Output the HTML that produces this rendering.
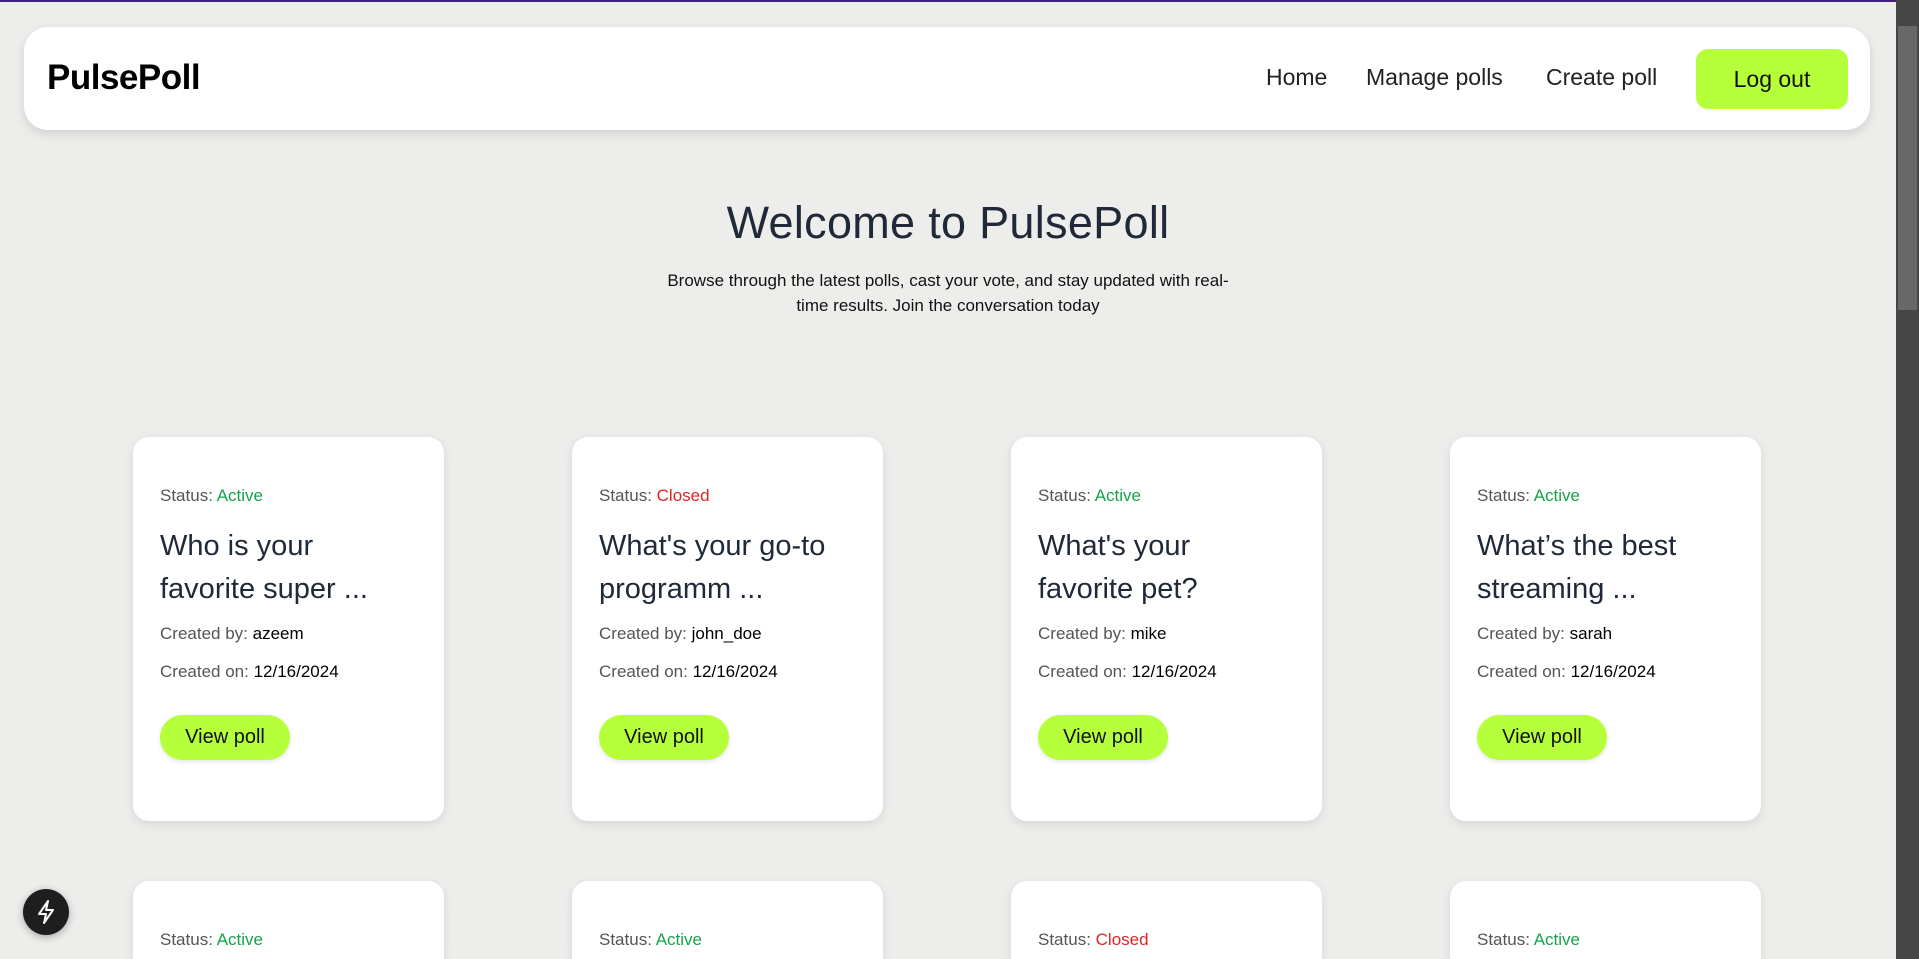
<!DOCTYPE html>
<html><head><meta charset="utf-8"><style>
*{box-sizing:border-box;margin:0;padding:0}
html,body{width:1919px;height:959px;overflow:hidden}
body{background:#ededeb;font-family:"Liberation Sans",sans-serif;position:relative}
.top{position:absolute;left:0;top:0;width:1919px;height:2px;background:#3f1f7a}
.nav{position:absolute;left:24px;top:27px;width:1846px;height:103px;background:#fff;border-radius:24px;box-shadow:0 4px 10px rgba(0,0,0,.12)}
.logo{position:absolute;left:23px;top:31px;font-size:35px;font-weight:bold;color:#000;letter-spacing:-0.5px}
.nav a{position:absolute;top:37px;font-size:23px;color:#222;text-decoration:none}
.btn{position:absolute;left:1672px;top:22px;width:152px;height:60px;background:#b5ff3b;border-radius:12px;font-size:23px;color:#111;text-align:center;line-height:60px}
.sb{position:absolute;left:1896px;top:0;width:23px;height:959px;background:#464646}
.th{position:absolute;left:1898px;top:26px;width:19px;height:284px;background:#686868}
h1{position:absolute;left:0;width:1896px;top:197px;text-align:center;font-size:45px;font-weight:normal;color:#1f2937;letter-spacing:0.3px}
.sub{position:absolute;left:658px;width:580px;top:268px;text-align:center;font-size:17px;line-height:25px;color:#111}
.card{position:absolute;width:311px;height:384px;background:#fff;border-radius:16px;box-shadow:0 3px 10px rgba(0,0,0,.1);padding:0 27px}
.card.s{height:78px;border-radius:16px 16px 0 0}
.st{position:absolute;left:27px;top:49px;font-size:17px;color:#555}
.g{color:#16a34a}.r{color:#dc2626}
.t{position:absolute;left:27px;top:88px;width:250px;font-size:29px;line-height:43px;color:#1f2937}
.cb{position:absolute;left:27px;font-size:17px;color:#555}
.cb b{color:#000;font-weight:normal}
.vp{position:absolute;left:27px;top:278px;width:130px;height:45px;background:#b5ff3b;border-radius:23px;font-size:20px;line-height:45px;text-align:center;color:#111;box-shadow:0 2px 4px rgba(0,0,0,.1)}
.fab{position:absolute;left:23px;top:889px;width:46px;height:46px;border-radius:50%;background:#1e1e1e;box-shadow:0 2px 8px rgba(0,0,0,.3)}
</style></head><body>
<div class="top"></div>
<div class="nav"><div class="logo">PulsePoll</div>
<a style="left:1242px">Home</a><a style="left:1342px">Manage polls</a><a style="left:1522px">Create poll</a>
<div class="btn">Log out</div></div>
<h1>Welcome to PulsePoll</h1>
<div class="sub">Browse through the latest polls, cast your vote, and stay updated with real-time results. Join the conversation today</div>
<div class="card" style="left:133px;top:437px"><div class="st">Status: <span class="g">Active</span></div><div class="t">Who is your favorite super ...</div><div class="cb" style="top:187px">Created by: <b>azeem</b></div><div class="cb" style="top:225px">Created on: <b>12/16/2024</b></div><div class="vp">View poll</div></div>
<div class="card" style="left:572px;top:437px"><div class="st">Status: <span class="r">Closed</span></div><div class="t">What's your go-to programm ...</div><div class="cb" style="top:187px">Created by: <b>john_doe</b></div><div class="cb" style="top:225px">Created on: <b>12/16/2024</b></div><div class="vp">View poll</div></div>
<div class="card" style="left:1011px;top:437px"><div class="st">Status: <span class="g">Active</span></div><div class="t">What's your favorite pet?</div><div class="cb" style="top:187px">Created by: <b>mike</b></div><div class="cb" style="top:225px">Created on: <b>12/16/2024</b></div><div class="vp">View poll</div></div>
<div class="card" style="left:1450px;top:437px"><div class="st">Status: <span class="g">Active</span></div><div class="t">What’s the best streaming ...</div><div class="cb" style="top:187px">Created by: <b>sarah</b></div><div class="cb" style="top:225px">Created on: <b>12/16/2024</b></div><div class="vp">View poll</div></div>
<div class="card s" style="left:133px;top:881px"><div class="st">Status: <span class="g">Active</span></div></div>
<div class="card s" style="left:572px;top:881px"><div class="st">Status: <span class="g">Active</span></div></div>
<div class="card s" style="left:1011px;top:881px"><div class="st">Status: <span class="r">Closed</span></div></div>
<div class="card s" style="left:1450px;top:881px"><div class="st">Status: <span class="g">Active</span></div></div>
<div class="fab"><svg width="46" height="46" viewBox="0 0 46 46"><path d="M25 12 L16 25 H23 L21 34 L30 21 H23 Z" fill="none" stroke="#fff" stroke-width="2" stroke-linejoin="round"/></svg></div>
<div class="sb"></div><div class="th"></div>
</body></html>
